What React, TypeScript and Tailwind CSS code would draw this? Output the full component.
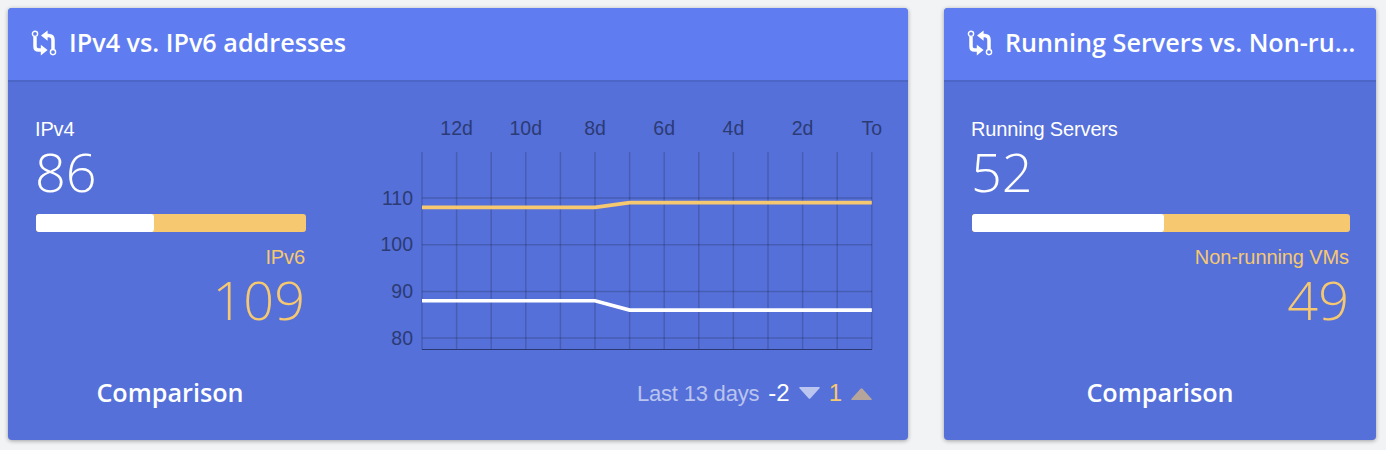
import { ReactNode } from 'react';
import clsx from 'clsx';

const days = ['12d', '10d', '8d', '6d', '4d', '2d', 'To'];
const levels = [110, 100, 90, 80];

const ipv4 = [88, 88, 88, 88, 88, 88, 86, 86, 86, 86, 86, 86, 86, 86];
const ipv6 = [108, 108, 108, 108, 108, 108, 109, 109, 109, 109, 109, 109, 109, 109];

const chartX = (i: number) => 46 + i * 34.6;
const chartY = (value: number) => 88 + (110 - value) * 4.67;
const toPoints = (values: number[]) => values.map((v, i) => `${chartX(i)},${chartY(v)}`).join(' ');

function CompareIcon() {
  return (
    <svg className="mb-0.5 h-[26px] w-[26px] shrink-0" viewBox="0 0 26 26" fill="none" stroke="white">
      <circle cx="4" cy="3.8" r="2.6" strokeWidth="1.4" />
      <circle cx="22" cy="22.1" r="2.6" strokeWidth="1.4" />
      <path d="M4 7v9.500q0 3.500 3.500 3.500h2.500" strokeWidth="3.500" />
      <path d="M22 19v-9q0-4.500-4.500-4.500h-1.500" strokeWidth="3.500" />
      <path d="M9.800 14.800l6.800 5.200-6.800 5.400zM16.600 .400v10.400l-6.600-5.200z" fill="white" stroke="none" />
    </svg>
  );
}

function Card({ title, className, children }: { title: string; className: string; children: ReactNode }) {
  return (
    <section
      className={clsx(
        'flex h-[432px] shrink-0 flex-col overflow-hidden rounded-[4px] bg-[#5570d9] shadow-[0_1px_4px_rgba(0,0,0,0.35)]',
        className,
      )}
    >
      <header className="flex h-[74px] shrink-0 items-center gap-3 border-b-2 border-[#4c66c8] bg-[#5f7df1] pr-5 pl-[23px]">
        <CompareIcon />
        <h2 className="truncate pb-1 font-['Open_Sans',sans-serif] text-[25.2px] leading-[36px] font-semibold">{title}</h2>
      </header>
      {children}
    </section>
  );
}

type ComparisonProps = {
  first: string;
  firstValue: number;
  second: string;
  secondValue: number;
  share: number;
};

function Comparison({ first, firstValue, second, secondValue, share }: ComparisonProps) {
  return (
    <div>
      <div className="-ml-px text-[20px] leading-6 tracking-[-0.15px]">{first}</div>
      <div className="-ml-px h-[73px] font-['Open_Sans',sans-serif] text-[54px] leading-[60px] font-light">{firstValue}</div>
      <div className="h-[18px] overflow-hidden rounded-[3px] bg-[#f6c870]">
        <div className="h-full rounded-[3px] bg-white" style={{ width: `${share}%` }} />
      </div>
      <div className="pt-[13px] text-right text-[#f6c870]">
        <div className="pr-px text-[20px] leading-6 tracking-[-0.1px]">{second}</div>
        <div className="h-16 pr-px font-['Open_Sans',sans-serif] text-[54px] leading-[60px] font-light">{secondValue}</div>
      </div>
      <div className="pt-[41px] pr-0.5 text-center font-['Open_Sans',sans-serif] text-[25.2px] leading-9 font-semibold">
        Comparison
      </div>
    </div>
  );
}

function HistoryChart() {
  return (
    <svg className="h-[244px] w-[508px]" viewBox="0 0 508 244">
      <g className="text-[19.500px]" fill="#2c3b74">
        {days.map((day, i) => (
          <text key={day} x={chartX(i * 2 + 1)} y="24.500" textAnchor="middle">
            {day}
          </text>
        ))}
        {levels.map((level) => (
          <text key={level} x="37" y={chartY(level) + 6.6} textAnchor="end">
            {level}
          </text>
        ))}
      </g>
      <g stroke="#000" strokeOpacity="0.17" strokeWidth="1.500">
        {ipv4.map((_, i) => (
          <line key={i} x1={chartX(i)} x2={chartX(i)} y1="42" y2="239.500" />
        ))}
        {levels.map((level) => (
          <line key={level} x1="46" x2="496" y1={chartY(level)} y2={chartY(level)} />
        ))}
      </g>
      <path d="M46 239.500H496" stroke="#293871" />
      <polyline points={toPoints(ipv6)} fill="none" stroke="#f6c870" strokeWidth="3.600" />
      <polyline points={toPoints(ipv4)} fill="none" stroke="white" strokeWidth="3.600" />
    </svg>
  );
}

export default function App() {
  return (
    <main className="flex h-[450px] w-[1386px] gap-9 overflow-hidden bg-[#f1f3f5] p-2 font-['Liberation_Sans',sans-serif] text-white">
      <Card title="IPv4 vs. IPv6 addresses" className="w-[900px]">
        <div className="flex pt-[35px] pl-7">
          <div className="w-[270px] shrink-0">
            <Comparison first="IPv4" firstValue={86} second="IPv6" secondValue={109} share={43.8} />
          </div>
          <div className="ml-[70px] w-[508px]">
            <div className="-mt-[7px]">
              <HistoryChart />
            </div>
            <div className="mt-[22px] flex items-center justify-end pr-3 leading-8">
              <span className="pt-0.5 text-[22px] tracking-[-0.2px] text-white/60">Last 13 days</span>
              <span className="ml-[9px] text-[24px]">-2</span>
              <svg className="ml-[9px] h-3 w-[21px]" viewBox="0 0 21 12" fill="white" fillOpacity="0.6">
                <path d="M1 0h19q1.500 0 .500 1.200l-9 10q-1 1-2 0l-9-10Q-.500 0 1 0z" />
              </svg>
              <span className="ml-[9px] text-[24px] text-[#f6c870]">1</span>
              <svg className="mt-0.5 ml-[9px] h-3 w-[21px]" viewBox="0 0 21 12" fill="#f6c870" fillOpacity="0.6">
                <path d="M1 12h19q1.500 0 .500-1.200l-9-10q-1-1-2 0l-9 10Q-.500 12 1 12z" />
              </svg>
            </div>
          </div>
        </div>
      </Card>
      <Card title="Running Servers vs. Non-running VMs" className="w-[432px]">
        <div className="pt-[35px] pr-[26px] pl-7">
          <Comparison first="Running Servers" firstValue={52} second="Non-running VMs" secondValue={49} share={50.8} />
        </div>
      </Card>
    </main>
  );
}
